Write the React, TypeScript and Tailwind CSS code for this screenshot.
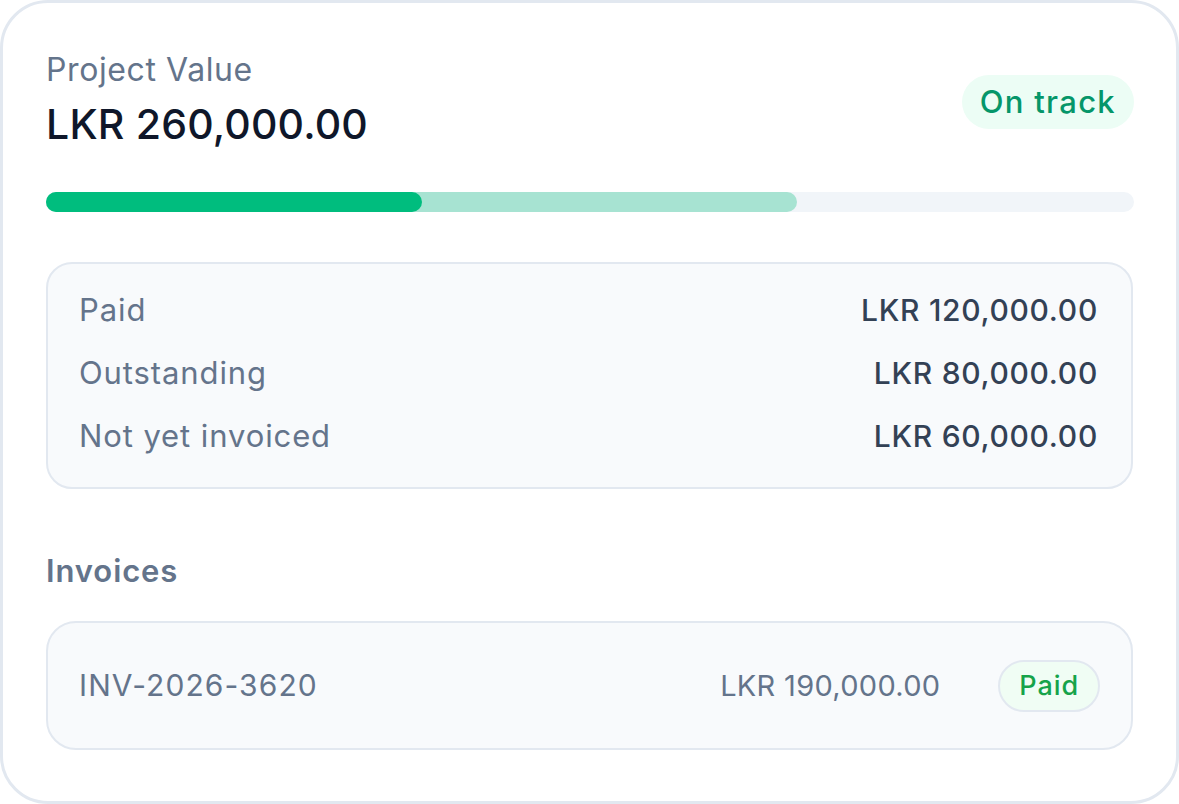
import React from 'react';

const rows = [
  { label: 'Paid', value: 'LKR 120,000.00' },
  { label: 'Outstanding', value: 'LKR 80,000.00' },
  { label: 'Not yet invoiced', value: 'LKR 60,000.00' },
];

export default function App() {
  return (
    <div
      className="w-[1179px] h-[804px] bg-white"
      style={{ fontFamily: 'Inter, "Noto Sans", sans-serif' }}
    >
      <div className="h-full rounded-[48px] border-[3px] border-[#e2e8f0] bg-white pl-[43px] pr-[42px] pt-[45px]">
        {/* Header */}
        <div className="flex items-center justify-between">
          <div>
            <div className="text-[32px] leading-[44px] tracking-[0.6px] text-[#64748b]">Project Value</div>
            <div className="text-[41px] leading-[64px] font-medium tracking-[0.2px] text-[#0f172a]">LKR 260,000.00</div>
          </div>
          <span className="rounded-full bg-[#ecfdf5] px-[18px] py-[7px] text-[31px] leading-[40px] tracking-[1.3px] font-medium text-[#059669]">
            On track
          </span>
        </div>

        {/* Progress */}
        <div className="relative mt-[36px] h-[20px] w-full rounded-full bg-[#f1f5f9]">
          <div className="absolute inset-y-0 left-0 w-[69%] rounded-full bg-[#a7e3d2]" />
          <div className="absolute inset-y-0 left-0 w-[34.6%] rounded-full bg-[#00bd7e]" />
        </div>

        {/* Summary */}
        <div className="mt-[50px] mr-[1px] rounded-[26px] border-2 border-[#e2e8f0] bg-[#f8fafc] pl-[31px] pr-[33px] pt-[26px] pb-[31px]">
          <div className="flex flex-col gap-[23px]">
            {rows.map((r) => (
              <div key={r.label} className="flex items-center justify-between text-[30px] leading-[40px]">
                <span className="text-[31px] tracking-[0.9px] text-[#64748b]">{r.label}</span>
                <span className="font-medium tracking-[0.7px] text-[#334155]">{r.value}</span>
              </div>
            ))}
          </div>
        </div>

        {/* Invoices */}
        <div className="mt-[62px] text-[31px] leading-[40px] tracking-[0.9px] font-semibold text-[#64748b]">Invoices</div>

        <div className="mt-[30px] mr-[1px] flex h-[129px] items-center rounded-[30px] border-2 border-[#e2e8f0] bg-[#f8fafc] pl-[31px] pr-[31px]">
          <span className="flex-1 text-[30px] tracking-[1.1px] text-[#64748b]">INV-2026-3620</span>
          <span className="text-[29px] tracking-[0.3px] text-[#64748b]">LKR 190,000.00</span>
          <span className="ml-[58px] rounded-full border-2 border-[#e2e8f0] bg-[#f0fdf4] px-[19px] py-[6px] text-[27px] leading-[36px] tracking-[0.9px] font-medium text-[#16a34a]">
            Paid
          </span>
        </div>
      </div>
    </div>
  );
}
